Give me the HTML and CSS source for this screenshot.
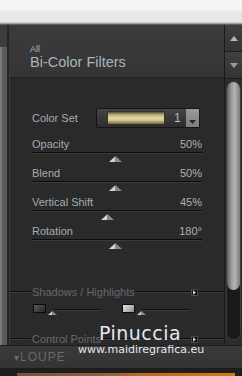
FILE: index.html
```html
<!DOCTYPE html>
<html>
<head>
<meta charset="utf-8">
<link rel="stylesheet" href="styles.css">
</head>
<body>
<div class="topbar"></div>
<div class="main">
  <div class="leftstrip"><div class="ls-top"></div><div class="ls-rest"></div></div>
  <div class="panel">
    <div class="header">
      <div class="crumb">All</div>
      <div class="title">Bi-Color Filters</div>
    </div>
    <div class="body">
      <div class="controls">
        <div class="colorset">
          <span class="label">Color Set</span>
          <div class="dropdown">
            <div class="swatch"></div>
            <span class="num">1</span>
            <div class="ddbtn"><svg width="7" height="4" viewBox="0 0 7 4"><polygon points="0,0 7,0 3.5,4" fill="#2a2a2a"/></svg></div>
          </div>
        </div>
        <div class="slider">
          <div class="srow"><span class="label">Opacity</span><span class="val">50%</span></div>
          <div class="track"></div>
          <div class="handle-row"><svg class="handle" style="margin-left: calc(49% - 6px)" width="13" height="6" viewBox="0 0 13 6"><polygon points="0,6 6.5,0 6.5,6" fill="#d4d4d4"/><polygon points="6.5,0 13,6 6.5,6" fill="#8a8a8a"/></svg></div>
        </div>
        <div class="slider">
          <div class="srow"><span class="label">Blend</span><span class="val">50%</span></div>
          <div class="track"></div>
          <div class="handle-row"><svg class="handle" style="margin-left: calc(49% - 6px)" width="13" height="6" viewBox="0 0 13 6"><polygon points="0,6 6.5,0 6.5,6" fill="#d4d4d4"/><polygon points="6.5,0 13,6 6.5,6" fill="#8a8a8a"/></svg></div>
        </div>
        <div class="slider">
          <div class="srow"><span class="label">Vertical Shift</span><span class="val">45%</span></div>
          <div class="track"></div>
          <div class="handle-row"><svg class="handle" style="margin-left: calc(44.4% - 6px)" width="13" height="6" viewBox="0 0 13 6"><polygon points="0,6 6.5,0 6.5,6" fill="#d4d4d4"/><polygon points="6.5,0 13,6 6.5,6" fill="#8a8a8a"/></svg></div>
        </div>
        <div class="slider">
          <div class="srow"><span class="label">Rotation</span><span class="val">180°</span></div>
          <div class="track"></div>
          <div class="handle-row"><svg class="handle" style="margin-left: calc(49% - 6px)" width="13" height="6" viewBox="0 0 13 6"><polygon points="0,6 6.5,0 6.5,6" fill="#d4d4d4"/><polygon points="6.5,0 13,6 6.5,6" fill="#8a8a8a"/></svg></div>
        </div>
      </div>
      <div class="section sec-shadows">
        <span class="sline lead"></span><span class="stitle">Shadows / Highlights</span><span class="sline grow"></span><span class="sbtn"><svg width="3" height="5" viewBox="0 0 3 5"><polygon points="0,0 3,2.5 0,5" fill="#c8c8c8"/></svg></span><span class="sline tail"></span>
      </div>
      <div class="sh-row">
        <div class="mini"><span class="msw dark"></span><svg class="mtri" width="9" height="4" viewBox="0 0 9 4"><polygon points="0,4 4.5,0 4.5,4" fill="#d0d0d0"/><polygon points="4.5,0 9,4 4.5,4" fill="#8a8a8a"/></svg><span class="mline"></span></div>
        <div class="mini"><span class="msw light"></span><svg class="mtri" width="9" height="4" viewBox="0 0 9 4"><polygon points="0,4 4.5,0 4.5,4" fill="#d0d0d0"/><polygon points="4.5,0 9,4 4.5,4" fill="#8a8a8a"/></svg><span class="mline"></span></div>
      </div>
      <div class="section sec-cp">
        <span class="sline lead"></span><span class="stitle">Control Points</span><span class="sline grow"></span><span class="sbtn"><svg width="3" height="5" viewBox="0 0 3 5"><polygon points="0,0 3,2.5 0,5" fill="#c8c8c8"/></svg></span><span class="sline tail"></span>
      </div>
    </div>
  </div>
  <div class="scroll">
    <div class="sbutton up"><svg width="8" height="5" viewBox="0 0 8 5"><polygon points="0,5 4,0 8,5" fill="#b4b4b4"/></svg></div>
    <div class="sbutton down"><svg width="8" height="5" viewBox="0 0 8 5"><polygon points="0,0 8,0 4,5" fill="#9a9a9a"/></svg></div>
    <div class="strack"><div class="thumb"></div></div>
  </div>
</div>
<div class="loupe"><span class="larrow">▾</span><span class="ltext">LOUPE</span></div>
<div class="bottom"><div class="strip"><span class="tick"></span></div></div>
<div class="watermark">
  <div class="wm1">Pinuccia</div>
  <div class="wm2">www.maidiregrafica.eu</div>
</div>
</body>
</html>
```
FILE: styles.css
```css
html, body {
  margin: 0;
  padding: 0;
}
body {
  width: 242px;
  height: 376px;
  overflow: hidden;
  background: #252525;
  font-family: "Liberation Sans", Arial, sans-serif;
  position: relative;
}
.topbar {
  height: 25px;
  background: linear-gradient(#f6f6f6 0, #f3f3f3 10px, #e9e9e9 11px, #e6e6e6 22px, #8a8a8a 24px, #3a3a3a 25px);
}
.main {
  display: flex;
  height: 320px;
}
.leftstrip {
  width: 10px;
  display: flex;
  flex-direction: column;
  background: #2a2a2a;
}
.ls-top {
  height: 22px;
  background: linear-gradient(to right, #3c3c3c 0 7px, #242424 7px 9px, #3a3a3a 9px);
}
.ls-rest {
  flex: 1;
  background: linear-gradient(to right, #7a7a7a 0 2px, #5a5a5a 2px 7px, #242424 7px 9px, #3a3a3a 9px);
}
.panel {
  flex: 1;
  display: flex;
  flex-direction: column;
  background: #2a2a2a;
}
.header {
  height: 54px;
  box-sizing: border-box;
  padding: 19px 0 0 20px;
  background: linear-gradient(#3b3b3b, #353535);
  border-bottom: 1px solid #232323;
}
.crumb {
  font-size: 9px;
  line-height: 10px;
  color: #a8b4c0;
}
.title {
  font-size: 14.5px;
  line-height: 17px;
  color: #aab4bf;
}
.body {
  flex: 1;
  display: flex;
  flex-direction: column;
}
.controls {
  padding: 30px 22px 0 22px;
}
.label {
  font-size: 11px;
  color: #a3acb5;
}
.colorset {
  display: flex;
  align-items: center;
  height: 20px;
  margin-bottom: 9px;
}
.colorset .label {
  width: 64px;
}
.dropdown {
  width: 104px;
  height: 20px;
  box-sizing: border-box;
  border: 1px solid #151515;
  border-radius: 2px;
  background: linear-gradient(#454545, #2c2c2c);
  display: flex;
  align-items: center;
  padding-left: 10px;
}
.swatch {
  width: 58px;
  height: 14px;
  box-sizing: border-box;
  border: 1px solid #3a3322;
  background: linear-gradient(#5b5236 0, #bfb27c 25%, #e3d9a6 50%, #cfc088 72%, #6e6440 100%);
}
.num {
  font-size: 12px;
  color: #b8b8b8;
  margin-left: 9px;
  width: 12px;
}
.ddbtn {
  margin-left: auto;
  width: 13px;
  height: 18px;
  background: linear-gradient(#9a9a9a, #7c7c7c);
  display: flex;
  align-items: flex-end;
  justify-content: center;
  padding-bottom: 3px;
  box-sizing: border-box;
}
.slider {
  height: 29px;
}
.srow {
  display: flex;
  justify-content: space-between;
  height: 15px;
  line-height: 14px;
}
.val {
  font-size: 11px;
  color: #b0b0b0;
}
.track {
  height: 1px;
  background: #0c0c0c;
  border-bottom: 1px solid #3a3a3a;
}
.handle-row {
  height: 6px;
  margin-top: 2px;
  display: flex;
}
.handle {
  display: block;
}
.section {
  display: flex;
  align-items: center;
  height: 12px;
}
.sec-shadows {
  margin-top: 33px;
}
.sec-cp {
  margin-top: 18px;
}
.sline {
  height: 1px;
  background: #0e0e0e;
  border-bottom: 1px solid #3c3c3c;
}
.lead {
  width: 21px;
  margin-right: 1px;
}
.grow {
  flex: 1;
}
.tail {
  width: 26px;
}
.stitle {
  font-size: 11px;
  color: #646b73;
  line-height: 12px;
}
.sbtn {
  width: 7px;
  height: 7px;
  background: #0a0a0a;
  border: 1px solid #4a4a4a;
  box-sizing: border-box;
  display: flex;
  align-items: center;
  justify-content: center;
}
.sh-row {
  display: flex;
  padding-left: 23px;
  margin-top: 6px;
  height: 11px;
}
.mini {
  width: 89px;
  display: flex;
  align-items: flex-end;
  position: relative;
}
.msw {
  width: 13px;
  height: 9px;
  box-sizing: border-box;
  border: 1px solid #0a0a0a;
  align-self: flex-start;
}
.msw.dark {
  background: linear-gradient(135deg, #5a5a5a, #262626);
}
.msw.light {
  background: linear-gradient(135deg, #e6e6e6, #8c8c8c);
}
.mtri {
  display: block;
  margin-left: 2px;
  margin-bottom: 0;
}
.mline {
  width: 48px;
  height: 1px;
  background: #0e0e0e;
  border-bottom: 1px solid #3c3c3c;
  align-self: flex-start;
  margin-top: 5px;
  margin-left: -4px;
}
.scroll {
  width: 17px;
  display: flex;
  flex-direction: column;
  background: #2c2c2c;
  border-left: 1px solid #1a1a1a;
}
.sbutton {
  height: 26px;
  display: flex;
  align-items: center;
  justify-content: center;
  background: linear-gradient(#404040, #343434);
  border-bottom: 1px solid #1c1c1c;
}
.sbutton.down {
  border-bottom: 1px solid #1c1c1c;
}
.strack {
  margin: 2px 1px 5px 1px;
  flex: 1;
  border-radius: 7px;
  background: #1a1a1a;
  border: 1px solid #3a3a3a;
  display: flex;
  flex-direction: column;
}
.thumb {
  height: 208px;
  border-radius: 7px 7px 7px 7px;
  background: linear-gradient(to right, #5c5c5c, #9c9c9c 35%, #b4b4b4 60%, #7a7a7a);
}
.loupe {
  height: 24px;
  box-sizing: border-box;
  background: linear-gradient(#3a3a3a, #333333);
  border-top: 1px solid #1e1e1e;
  border-bottom: 1px solid #1c1c1c;
  display: flex;
  align-items: center;
  padding-left: 14px;
}
.larrow {
  font-size: 10px;
  color: #6c6c6c;
  margin-right: 1px;
}
.ltext {
  font-size: 12px;
  letter-spacing: 1px;
  color: #686868;
}
.bottom {
  height: 7px;
  background: #1e1e1e;
  padding: 4px 7px 0 17px;
  box-sizing: border-box;
}
.strip {
  height: 3px;
  position: relative;
  background: linear-gradient(to right, #6e5440, #8a6440 40%, #b56a20 55%, #d47a10);
}
.tick {
  position: absolute;
  left: 109px;
  top: 0;
  width: 1px;
  height: 3px;
  background: #ff2020;
}
.watermark {
  position: absolute;
  left: 78px;
  top: 322px;
  text-align: center;
  width: 124px;
  color: #e6e6f0;
  font-family: "DejaVu Sans", sans-serif;
}
.wm1 {
  font-size: 19px;
  line-height: 22px;
  letter-spacing: 0.5px;
}
.wm2 {
  font-size: 11px;
  line-height: 14px;
  margin-top: -1px;
}
```
